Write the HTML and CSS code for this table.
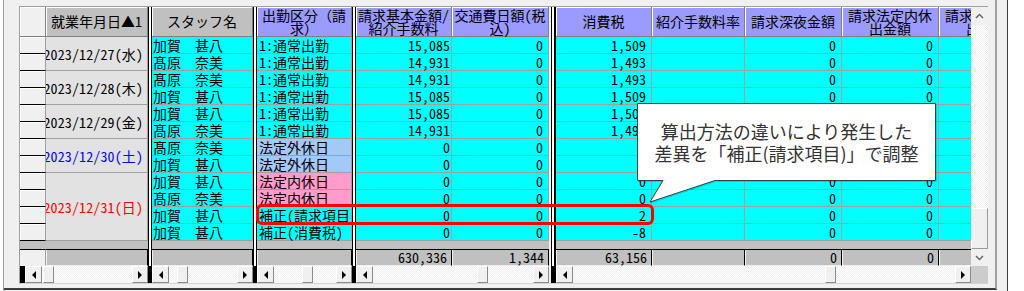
FILE: index.html
```html
<!DOCTYPE html>
<html lang="ja">
<head>
<meta charset="utf-8">
<title>請求明細</title>
<link rel="stylesheet" href="styles.css">
</head>
<body>
<div class="window">
  <div class="inner">
    <div class="panel">
      <div class="grid">
        <div class="split s1"></div>
        <div class="split s2"></div>
        <div class="split s3"></div>
        <div class="split s4"></div>
        <div class="vscroll">
          <div class="vbtn up"><svg width="9" height="6" viewBox="0 0 9 6"><path d="M1 5 L4.5 1.5 L8 5" fill="none" stroke="#606060" stroke-width="1.4"/></svg></div>
          <div class="vtrack"><div class="vthumb"></div></div>
          <div class="vbtn down"><svg width="9" height="6" viewBox="0 0 9 6"><path d="M1 1 L4.5 4.5 L8 1" fill="none" stroke="#606060" stroke-width="1.4"/></svg></div>
        </div>

        <!-- header -->
        <div class="hd hsel"></div>
        <div class="hd g"><span>就業年月日▲1</span></div>
        <div class="hd g fw"><span>スタッフ名</span></div>
        <div class="hd b fw"><span>出勤区分（請求）</span></div>
        <div class="hd b"><span>請求基本金額/紹介手数料</span></div>
        <div class="hd b"><span>交通費日額(税込)</span></div>
        <div class="hd b"><span>消費税</span></div>
        <div class="hd b"><span>紹介手数料率</span></div>
        <div class="hd b"><span>請求深夜金額</span></div>
        <div class="hd b"><span>請求法定内休出金額</span></div>
        <div class="hd b part"><span>請求法定内休出金額</span></div>

        <!-- row 1 -->
        <div class="rs"></div>
        <div class="dt"><span>2023/12/27(水)</span></div>
        <div class="c nm fw">加賀　甚八</div>
        <div class="c tx">1:通常出勤</div>
        <div class="c n k">15,085</div>
        <div class="c n">0</div>
        <div class="c n">1,509</div>
        <div class="c"></div>
        <div class="c n">0</div>
        <div class="c n">0</div>
        <div class="c pt"></div>
        <!-- row 2 -->
        <div class="rs"></div>
        <div class="c nm fw">髙原　奈美</div>
        <div class="c tx">1:通常出勤</div>
        <div class="c n k">14,931</div>
        <div class="c n">0</div>
        <div class="c n">1,493</div>
        <div class="c"></div>
        <div class="c n">0</div>
        <div class="c n">0</div>
        <div class="c pt"></div>
        <!-- row 3 -->
        <div class="rs"></div>
        <div class="dt"><span>2023/12/28(木)</span></div>
        <div class="c nm fw">髙原　奈美</div>
        <div class="c tx">1:通常出勤</div>
        <div class="c n k">14,931</div>
        <div class="c n">0</div>
        <div class="c n">1,493</div>
        <div class="c"></div>
        <div class="c n">0</div>
        <div class="c n">0</div>
        <div class="c pt"></div>
        <!-- row 4 -->
        <div class="rs"></div>
        <div class="c nm fw">加賀　甚八</div>
        <div class="c tx">1:通常出勤</div>
        <div class="c n k">15,085</div>
        <div class="c n">0</div>
        <div class="c n">1,509</div>
        <div class="c"></div>
        <div class="c n">0</div>
        <div class="c n">0</div>
        <div class="c pt"></div>
        <!-- row 5 -->
        <div class="rs"></div>
        <div class="dt"><span>2023/12/29(金)</span></div>
        <div class="c nm fw">加賀　甚八</div>
        <div class="c tx">1:通常出勤</div>
        <div class="c n k">15,085</div>
        <div class="c n">0</div>
        <div class="c n">1,509</div>
        <div class="c"></div>
        <div class="c n">0</div>
        <div class="c n">0</div>
        <div class="c pt"></div>
        <!-- row 6 -->
        <div class="rs"></div>
        <div class="c nm fw">髙原　奈美</div>
        <div class="c tx">1:通常出勤</div>
        <div class="c n k">14,931</div>
        <div class="c n">0</div>
        <div class="c n">1,493</div>
        <div class="c"></div>
        <div class="c n">0</div>
        <div class="c n">0</div>
        <div class="c pt"></div>
        <!-- row 7 -->
        <div class="rs"></div>
        <div class="dt sat"><span>2023/12/30(土)</span></div>
        <div class="c nm fw">髙原　奈美</div>
        <div class="c tx gai">法定外休日</div>
        <div class="c n k">0</div>
        <div class="c n">0</div>
        <div class="c n">0</div>
        <div class="c"></div>
        <div class="c n">0</div>
        <div class="c n">0</div>
        <div class="c pt"></div>
        <!-- row 8 -->
        <div class="rs"></div>
        <div class="c nm fw">加賀　甚八</div>
        <div class="c tx gai">法定外休日</div>
        <div class="c n k">0</div>
        <div class="c n">0</div>
        <div class="c n">0</div>
        <div class="c"></div>
        <div class="c n">0</div>
        <div class="c n">0</div>
        <div class="c pt"></div>
        <!-- row 9 -->
        <div class="rs"></div>
        <div class="dt sun l4"><span>2023/12/31(日)</span></div>
        <div class="c nm fw">加賀　甚八</div>
        <div class="c tx nai">法定内休日</div>
        <div class="c n k">0</div>
        <div class="c n">0</div>
        <div class="c n">0</div>
        <div class="c"></div>
        <div class="c n">0</div>
        <div class="c n">0</div>
        <div class="c pt"></div>
        <!-- row 10 -->
        <div class="rs"></div>
        <div class="c nm fw">髙原　奈美</div>
        <div class="c tx nai">法定内休日</div>
        <div class="c n k">0</div>
        <div class="c n">0</div>
        <div class="c n">0</div>
        <div class="c"></div>
        <div class="c n">0</div>
        <div class="c n">0</div>
        <div class="c pt"></div>
        <!-- row 11 -->
        <div class="rs"></div>
        <div class="c nm fw">加賀　甚八</div>
        <div class="c tx clip">補正(請求項目)</div>
        <div class="c n k">0</div>
        <div class="c n">0</div>
        <div class="c n">2</div>
        <div class="c"></div>
        <div class="c n">0</div>
        <div class="c n">0</div>
        <div class="c pt"></div>
        <!-- row 12 -->
        <div class="rs"></div>
        <div class="c nm fw">加賀　甚八</div>
        <div class="c tx">補正(消費税)</div>
        <div class="c n k">0</div>
        <div class="c n">0</div>
        <div class="c n">-8</div>
        <div class="c"></div>
        <div class="c n">0</div>
        <div class="c n">0</div>
        <div class="c pt"></div>

        <!-- band -->
        <div class="band w2"></div>
        <div class="band"></div>
        <div class="band"></div>
        <div class="band w2"></div>
        <div class="band w5"></div>

        <!-- footer totals -->
        <div class="ft fsel"></div>
        <div class="ft"></div>
        <div class="ft"></div>
        <div class="ft"></div>
        <div class="ft">630,336</div>
        <div class="ft">1,344</div>
        <div class="ft">63,156</div>
        <div class="ft"></div>
        <div class="ft">0</div>
        <div class="ft">0</div>
        <div class="ft fend"></div>

        <!-- horizontal scrollbars -->
        <div class="hs w2"><i class="blk"></i><b class="hb l"></b><div class="ht"><i class="th t1"></i></div><b class="hb r"></b></div>
        <div class="hs"><b class="hb l"></b><div class="ht"><i class="th t2"></i></div><b class="hb r"></b></div>
        <div class="hs"><b class="hb l"></b><div class="ht"><i class="th t3"></i></div><b class="hb r"></b></div>
        <div class="hs w2"><b class="hb l"></b><div class="ht"><i class="th t4"></i></div><b class="hb r"></b></div>
        <div class="hs w5"><b class="hb l"></b><div class="ht"><i class="th t5"></i></div><b class="hb r"></b></div>
        <div class="corner"></div>
      </div>
    </div>

    <div class="mark"></div>
    <div class="callout">
      <svg class="bubble" width="302" height="102" viewBox="0 0 302 102"><path d="M0.5 0.5 H298.5 V77.5 H78 L13 99 L26 77.5 H0.5 Z" fill="#ffffff" stroke="#3c3c3c" stroke-width="1"/></svg>
      <div class="ctext">算出方法の違いにより発生した<br>差異を「補正(請求項目)」で調整</div>
    </div>
  </div>
</div>
</body>
</html>
```

FILE: styles.css
```css
* { box-sizing: border-box; }
html, body { margin: 0; padding: 0; background: #ffffff; }
body {
  width: 1024px;
  height: 291px;
  overflow: hidden;
  font-family: "Noto Sans CJK JP", sans-serif;
}

.window {
  margin-left: 3px;
  width: 1005px;
  height: 291px;
  background: #f0f0f0;
  border-left: 1px solid #a0a0a0;
  border-right: 1px solid #3c3c3c;
}
.inner {
  position: relative;
  width: 993px;
  height: 290px;
  padding: 6px 0 0 15px;
  border-right: 2px solid #a0a0a0;
  border-bottom: 2px solid #3c3c3c;
}
.panel {
  width: 969px;
  border-top: 1px solid #a0a0a0;
  border-left: 1px solid #a0a0a0;
  border-bottom: 1px solid #d4d4d4;
  background: #ffffff;
}
.grid {
  display: grid;
  grid-template-columns: 26px 102px 4px 101px 4px 95px 4px 96px 97px 7px 96px 93px 97px 97px 32px 17px;
  grid-template-rows: 30px repeat(12, 17px) 8px 17px 17px;
  font-size: 14px;
  line-height: 16px;
  color: #000;
  font-feature-settings: "hwid" 1;
}
.fw { font-feature-settings: normal; }

/* frozen split lines */
.split {
  grid-row: 1 / -1;
  background: linear-gradient(#ffffff, #ffffff) top / 100% calc(100% - 17px) no-repeat, #000;
  border-left: 1px solid #000;
  border-right: 1px solid #000;
}
.s1 { grid-column: 3; }
.s2 { grid-column: 5; }
.s3 { grid-column: 7; }
.s4 { grid-column: 10; border-left: 2px solid #f0f0f0; border-right-width: 2px; box-shadow: inset 1px 0 #000; }

/* header */
.hd {
  border-right: 1px solid #808080;
  border-bottom: 1px solid #808080;
  box-shadow: inset 1px 1px #ffffff;
  display: flex;
  align-items: center;
  justify-content: center;
  text-align: center;
  line-height: 13px;
}
.hd span { display: block; }
.hsel { background: #f0f0f0; }
.g { background: #c0c0c0; }
.b { background: #9a9aff; }
.part { justify-content: flex-start; border-right: 0; overflow: hidden; }
.part span { width: 96px; flex-shrink: 0; }

/* row selector */
.rs {
  background: #f0f0f0;
  border-right: 1px solid #a0a0a0;
  border-bottom: 1px solid #000;
  box-shadow: inset 1px 1px #ffffff;
}

/* date */
.dt {
  grid-row: span 2;
  background: #e2e2e2;
  border-right: 1px solid #a0a0a0;
  border-bottom: 1px solid #a0a0a0;
  display: flex;
  align-items: center;
  justify-content: flex-end;
  padding-right: 4px;
  overflow: hidden;
  white-space: nowrap;
  letter-spacing: 0.12px;
}
.dt span { flex-shrink: 0; }
.dt.l4 { grid-row: span 4; }
.sat { color: #0000ff; }
.sun { color: #ff0000; }

/* data cells */
.c {
  background: #00ffff;
  border-right: 1px solid #a0a0a0;
  border-bottom: 1px solid #a0a0a0;
  white-space: nowrap;
  padding-left: 1px;
}
.tx { padding-left: 2px; }
.clip { overflow: hidden; }
.n { text-align: right; padding-right: 5px; }
.n.k { padding-right: 1px; }
.gai { background: #a4c8f8; }
.nai { background: #ff9ccc; }
.pt { border-right: 0; }

/* grey band under rows */
.band { background: #c0c0c0; }
.w2 { grid-column: span 2; }
.w5 { grid-column: span 5; }

/* totals row */
.ft {
  background: #c0c0c0;
  border-top: 1px solid #000;
  border-right: 1px solid #000;
  border-bottom: 1px solid #f0f0f0;
  box-shadow: inset 1px 0 #f0f0f0;
  text-align: right;
  padding-right: 4px;
  line-height: 15px;
}
.fsel { background: #f0f0f0; border-right: 1px solid #a0a0a0; }
.fend { border-right: 0; }

/* vertical scrollbar */
.vscroll {
  grid-column: 16;
  grid-row: 1 / 16;
  display: flex;
  flex-direction: column;
  background: #f0f0f0;
}
.vbtn {
  height: 18px;
  display: flex;
  align-items: center;
  justify-content: center;
}
.vbtn.down { height: 17px; }
.vtrack {
  flex: 1;
  display: flex;
  flex-direction: column;
  justify-content: flex-end;
  background: repeating-conic-gradient(#ffffff 0 25%, #eeeeee 0 50%) 0 0 / 2px 2px;
}
.vthumb {
  height: 41px;
  background: #f0f0f0;
  border: 1px solid;
  border-color: #ffffff #9a9a9a #9a9a9a #ffffff;
}

/* horizontal scrollbars */
.hs { display: flex; background: #f0f0f0; }
.blk { width: 5px; background: #000; flex-shrink: 0; }
.hb {
  width: 17px;
  flex-shrink: 0;
  background: #f0f0f0;
  border: 1px solid;
  border-color: #ffffff #8a8a8a #8a8a8a #ffffff;
  display: flex;
  align-items: center;
  justify-content: center;
}
.hb.r { width: 16px; }
.hb::before {
  content: "";
  border-style: solid;
}
.hb.l::before { border-width: 4px 4px 4px 0; border-color: transparent #000 transparent transparent; }
.hb.r::before { border-width: 4px 0 4px 4px; border-color: transparent transparent transparent #000; }
.ht {
  flex: 1;
  display: flex;
  background: repeating-conic-gradient(#ffffff 0 25%, #eeeeee 0 50%) 0 0 / 2px 2px;
}
.th {
  width: 11px;
  background: #f0f0f0;
  border: 1px solid;
  border-color: #ffffff #8a8a8a #8a8a8a #ffffff;
}
.t1 { margin-left: 1px; }
.t2 { margin-left: 8px; }
.t3 { margin-left: 28px; }
.t4 { margin-left: 104px; }
.t5 { margin-left: 252px; }
.corner { background: #cccccc; }

/* overlays */
.mark {
  position: absolute;
  left: 252px;
  top: 204px;
  width: 398px;
  height: 21px;
  border: 3px solid #ff0000;
  border-radius: 6px;
}
.callout {
  position: absolute;
  left: 633px;
  top: 103px;
  width: 302px;
  height: 102px;
}
.bubble {
  position: absolute;
  left: 0;
  top: 0;
  filter: drop-shadow(1px 1px 0 rgba(0,0,0,0.15));
}
.ctext {
  position: relative;
  width: 299px;
  height: 78px;
  display: flex;
  align-items: center;
  justify-content: center;
  text-align: center;
  font-size: 18px;
  line-height: 22px;
  color: #333333;
}
```
